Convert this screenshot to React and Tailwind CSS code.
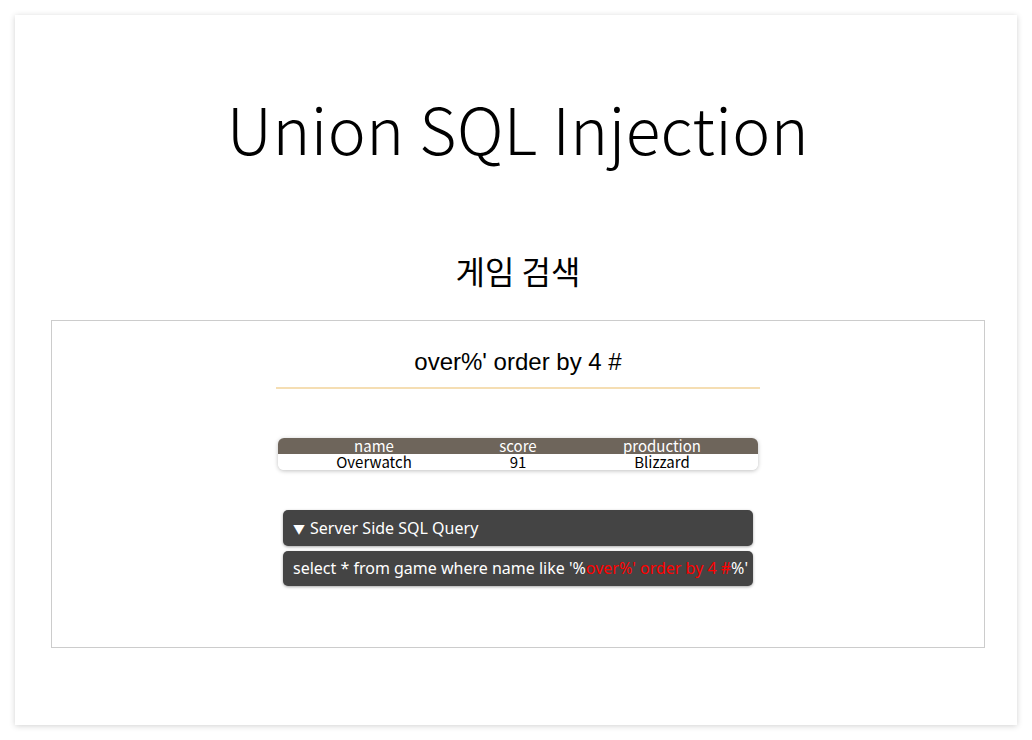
import React from 'react';

const kr = { fontFamily: '"Noto Sans CJK KR", "Noto Sans", sans-serif' };
const latin = { fontFamily: '"Noto Sans", "Noto Sans CJK KR", sans-serif' };

const App = () => {
  return (
    <div className="min-h-screen bg-white p-[15px]" style={kr}>
      <div className="h-[710px] bg-white shadow-[0_1px_6px_rgba(0,0,0,0.18)] pl-9 pr-8 pt-[72px]">
        {/* Title */}
        <h1 className="text-center text-[64px] leading-[80px] font-light tracking-[0.5px] text-black">
          Union SQL Injection
        </h1>
        <h2 className="mt-[79px] text-center text-[32px] leading-[48px] text-black">
          게임 검색
        </h2>

        {/* Search box */}
        <div className="mt-[26px] h-[328px] border border-[#cccccc] flex flex-col items-center pt-[26px]">
          <div className="w-[484px] border-b-2 border-[#f5deb3] pb-[10px] text-center text-[24px] leading-[30px] text-black" style={{ fontFamily: '"Liberation Sans", Arial, sans-serif' }}>
            over%' order by 4 #
          </div>

          <table className="mt-[49px] w-[480px] text-center text-[15px] leading-[16px] rounded-md shadow-[0_1px_4px_rgba(0,0,0,0.25)] overflow-hidden border-separate border-spacing-0">
            <thead>
              <tr className="bg-[#6e655b] text-white">
                <th className="font-normal w-[40%] h-[16px]">name</th>
                <th className="font-normal w-[20%] h-[16px]">score</th>
                <th className="font-normal w-[40%] h-[16px]">production</th>
              </tr>
            </thead>
            <tbody>
              <tr className="bg-white text-black">
                <td className="h-[16px]">Overwatch</td>
                <td className="h-[16px]">91</td>
                <td className="h-[16px]">Blizzard</td>
              </tr>
            </tbody>
          </table>

          <div className="mt-[40px] w-[470px] flex flex-col gap-[5px] text-white text-[16px]" style={latin}>
            <div className="h-[36px] leading-[36px] px-[10px] bg-[#444444] rounded-[5px] shadow-[0_1px_3px_rgba(0,0,0,0.35)] whitespace-nowrap">
              <span className="text-[12px] mr-[5px]">▼</span>Server Side SQL Query
            </div>
            <div className="h-[35px] leading-[35px] px-[10px] bg-[#444444] rounded-[5px] shadow-[0_1px_3px_rgba(0,0,0,0.35)] whitespace-nowrap">
              select * from game where name like '%<span className="text-[#ff0000]">over%' order by 4 #</span>%'
            </div>
          </div>
        </div>
      </div>
    </div>
  );
};

export default App;
